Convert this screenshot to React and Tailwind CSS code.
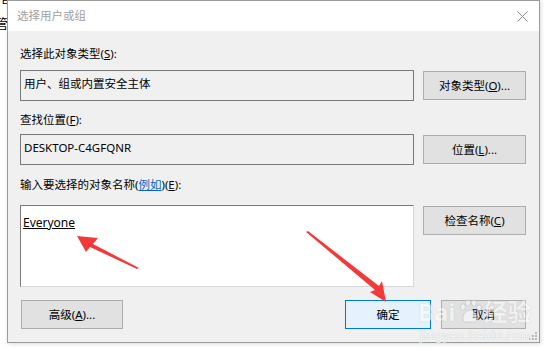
import React from "react";

const font = { fontFamily: '"Segoe UI", "Noto Sans", "Noto Sans CJK SC", sans-serif' };

function Btn({ children, primary, className = "" }) {
  return (
    <div
      className={`flex h-[29px] items-center justify-center border text-[11.5px] text-black ${
        primary ? "border-[#0078d7] bg-[#e5f1fb]" : "border-[#adadad] bg-[#e1e1e1]"
      } ${className}`}
    >
      {children}
    </div>
  );
}

function Arrow({ points }) {
  return <polygon points={points} fill="#f33a3a" />;
}

export default function App() {
  return (
    <div className="relative h-[350px] w-[547px] overflow-hidden bg-white" style={font}>
      {/* window behind */}
      <div className="absolute left-0 top-[-9px] text-[13px] leading-none text-black">管理员用户或组的权限</div>
      <div className="absolute left-[-5px] top-[17px] text-[13px] leading-none text-black">管</div>

      <div className="relative ml-[7px] flex h-[343px] w-[533px] flex-col border border-[#9a9a9a] bg-[#f0f0f0] shadow-[1px_1px_4px_rgba(0,0,0,0.15)]">
        <div className="flex h-[30px] shrink-0 items-center justify-between bg-white pl-[9px] pr-[10px]">
          <span className="text-[11.5px] text-[#a0a0a0]">选择用户或组</span>
          <svg width="11" height="11" viewBox="0 0 11 11" className="mr-[1px]">
            <path d="M0.5 0.5 L10.5 10.5 M10.5 0.5 L0.5 10.5" stroke="#8a8a8a" strokeWidth="1" />
          </svg>
        </div>

        <div className="flex flex-1 flex-col pl-[12px] pr-[12px]">
          <div className="mt-[15px] h-[16px] text-[11.5px] leading-[16px] text-black">
            选择此对象类型(<u>S</u>):
          </div>
          <div className="mt-[8px] flex items-center gap-[9px]">
            <div className="h-[31px] w-[394px] border border-[#7a7a7a] bg-[#f0f0f0] px-[3px] pt-[4px] text-[11.5px] text-black">
              用户、组或内置安全主体
            </div>
            <Btn className="w-[103px]">对象类型(<u>O</u>)...</Btn>
          </div>

          <div className="mt-[11px] h-[16px] text-[11.5px] leading-[16px] text-black">
            查找位置(<u>F</u>):
          </div>
          <div className="mt-[6px] flex items-center gap-[9px]">
            <div className="h-[31px] w-[394px] border border-[#7a7a7a] bg-[#f0f0f0] px-[3px] pt-[4px] text-[11.5px] text-black">
              DESKTOP-C4GFQNR
            </div>
            <Btn className="w-[103px]">位置(<u>L</u>)...</Btn>
          </div>

          <div className="mt-[12px] h-[16px] text-[11.5px] leading-[16px] text-black">
            输入要选择的对象名称(<span className="text-[#0066cc] underline">例如</span>)(<u>E</u>):
          </div>
          <div className="mt-[12px] flex items-start gap-[9px]">
            <div className="h-[82px] w-[394px] border border-[#7a7a7a] border-b-[#d8d8d8] border-r-[#d8d8d8] bg-white px-[2px] pt-[9px] text-[12px] leading-[16px] text-black">
              <span className="underline">Everyone</span>
            </div>
            <Btn className="mt-px w-[103px]">检查名称(<u>C</u>)</Btn>
          </div>

          <div className="mt-[13px] flex items-center">
            <Btn className="ml-px w-[102px]">高级(<u>A</u>)...</Btn>
            <Btn primary className="ml-[222px] w-[86px]">确定</Btn>
            <Btn className="ml-[10px] w-[85px]">取消</Btn>
          </div>
        </div>

        {/* resize grip */}
        <svg width="8" height="8" viewBox="0 0 8 8" className="absolute bottom-[2px] right-[2px]">
          <rect x="6" y="0" width="2" height="2" fill="#b8b8b8" />
          <rect x="3" y="3" width="2" height="2" fill="#b8b8b8" />
          <rect x="6" y="3" width="2" height="2" fill="#b8b8b8" />
          <rect x="0" y="6" width="2" height="2" fill="#b8b8b8" />
          <rect x="3" y="6" width="2" height="2" fill="#b8b8b8" />
          <rect x="6" y="6" width="2" height="2" fill="#b8b8b8" />
        </svg>
      </div>

      {/* baidu watermark */}
      <div className="pointer-events-none absolute left-[418px] top-[299px] flex items-center text-[24px] font-bold leading-none text-white opacity-55" style={{ textShadow: "0 0 1px #999" }}>
        <span>Bai</span>
        <svg width="26" height="26" viewBox="0 0 26 26" className="mx-[1px]">
          <g fill="#ffffff" stroke="#b0b0b0" strokeWidth="0.8">
            <ellipse cx="6" cy="8" rx="2.5" ry="3.2" />
            <ellipse cx="11" cy="4" rx="2.5" ry="3.2" />
            <ellipse cx="17" cy="4" rx="2.5" ry="3.2" />
            <ellipse cx="22" cy="9" rx="2.5" ry="3.2" />
            <path d="M13 11 C8 11 5 17 6 21 C7 24 11 23 13 23 C15 23 19 24 20 21 C21 17 18 11 13 11 Z" />
          </g>
        </svg>
        <span>经验</span>
      </div>
      <div className="pointer-events-none absolute left-[420px] top-[330px] text-[12px] leading-none tracking-[0.5px] text-white opacity-70" style={{ textShadow: "0 0 1px #999" }}>
        jingyan.baidu.com
      </div>

      {/* red arrows */}
      <svg width="547" height="350" className="pointer-events-none absolute left-0 top-0">
        <Arrow points="77,236 98,238 93,244 139,268 137,269 90,247 86,252" />
        <Arrow points="386,302 370,292 375,290 306,232 308,231 379,286 382,281" />
      </svg>
    </div>
  );
}
